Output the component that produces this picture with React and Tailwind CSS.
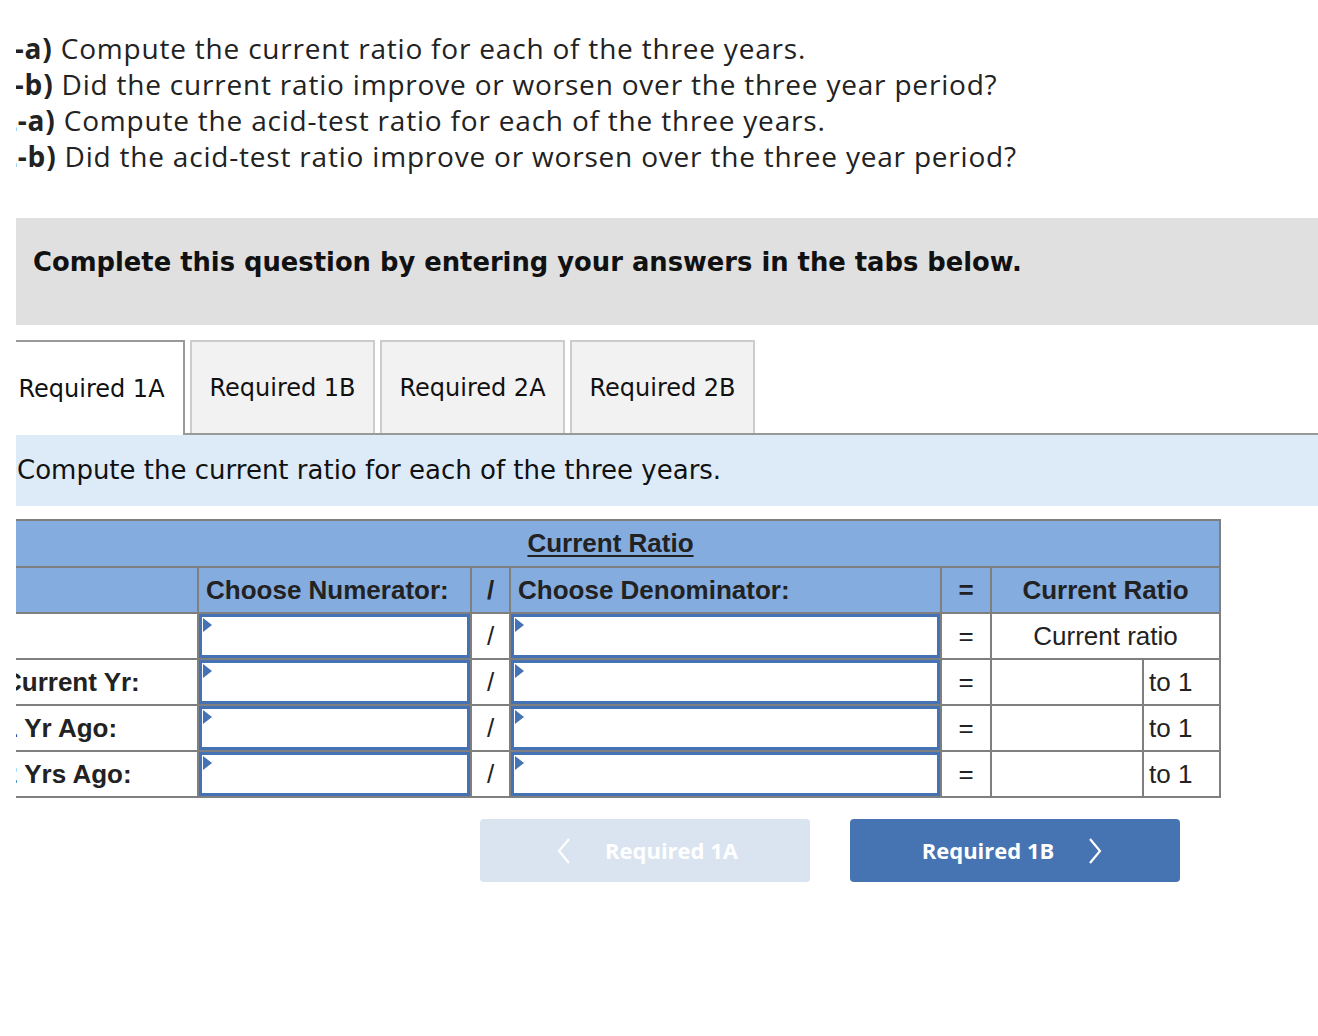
import React from "react";

const Tri = () => (
  <svg className="absolute left-[1px] top-[1px]" width="10" height="14" viewBox="0 0 10 14">
    <polygon points="0,0 9,7 0,14" fill="#4472b4" />
  </svg>
);

const InputCell = () => (
  <td className="p-0 border-2 border-[#7f7f7f] h-[46px]">
    <div className="relative h-[44px] border-[3px] border-[#4472b4] bg-white">
      <Tri />
    </div>
  </td>
);

const cell = "border-2 border-[#7f7f7f] h-[46px]";

function Row({ label, first }) {
  return (
    <tr>
      <td className={`${cell} overflow-hidden whitespace-nowrap pl-[1px] font-bold text-left`}>{label}</td>
      <InputCell />
      <td className={`${cell} text-center`}>/</td>
      <InputCell />
      <td className={`${cell} text-center`}>=</td>
      {first ? (
        <td colSpan={2} className={`${cell} text-center`}>Current ratio</td>
      ) : (
        <>
          <td className={cell}></td>
          <td className={`${cell} pl-[5px] text-left`}>to 1</td>
        </>
      )}
    </tr>
  );
}

export default function App() {
  return (
    <div className="w-[1318px] h-[1036px] bg-white overflow-hidden">
      <div className="ml-[16px] overflow-hidden">
        <div className="-ml-[16px] w-[1318px]">
          {/* question lines */}
          <div className="pt-[30px] text-[28px] tracking-[0.8px] leading-[36px] text-[#222] whitespace-nowrap" style={{ fontFamily: "'Open Sans', sans-serif" }}>
            <div className="-ml-[2px]"><b>1-a)</b> Compute the current ratio for each of the three years.</div>
            <div className="-ml-[2px]"><b>1-b)</b> Did the current ratio improve or worsen over the three year period?</div>
            <div className="ml-[1px]"><b>2-a)</b> Compute the acid-test ratio for each of the three years.</div>
            <div className="ml-[1px]"><b>2-b)</b> Did the acid-test ratio improve or worsen over the three year period?</div>
          </div>

          {/* banner */}
          <div className="mt-[44px] h-[107px] bg-[#e0e0e0] pl-[33px] pt-[27px] text-[25.8px] leading-[34px] font-bold text-[#111] whitespace-nowrap" style={{ fontFamily: "'DejaVu Sans', sans-serif" }}>
            Complete this question by entering your answers in the tabs below.
          </div>

          {/* tabs */}
          <div className="mt-[15px] flex text-[24px] text-[#111]" style={{ fontFamily: "'DejaVu Sans', sans-serif" }}>
            <div className="w-[185px] h-[95px] border-t-2 border-r-2 border-[#999] bg-white flex items-center justify-center">
              Required 1A
            </div>
            <div className="flex-1 flex gap-[5px] pl-[5px] border-b-2 border-[#999]">
              {["Required 1B", "Required 2A", "Required 2B"].map((t) => (
                <div key={t} className="w-[185px] h-[93px] border-t-2 border-x-2 border-[#ccc] bg-[#f2f2f2] flex items-center justify-center">
                  {t}
                </div>
              ))}
            </div>
          </div>

          {/* instruction */}
          <div className="h-[71px] bg-[#ddebf8] flex items-center pl-[17px] text-[26px] text-[#111] whitespace-nowrap" style={{ fontFamily: "'DejaVu Sans', sans-serif" }}>
            Compute the current ratio for each of the three years.
          </div>

          {/* table */}
          <div className="mt-[13px]">
            <table className="table-fixed border-collapse w-[1219px] text-[26px] text-[#222]" style={{ fontFamily: "'Liberation Sans', Arial, sans-serif" }}>
              <colgroup>
                <col className="w-[197px]" />
                <col className="w-[273px]" />
                <col className="w-[39px]" />
                <col className="w-[431px]" />
                <col className="w-[50px]" />
                <col className="w-[152px]" />
                <col className="w-[77px]" />
              </colgroup>
              <thead>
                <tr className="bg-[#84acdf]">
                  <th colSpan={7} className="border-2 border-[#7f7f7f] h-[47px] font-bold text-center">
                    <span className="underline underline-offset-[3px] decoration-2">Current Ratio</span>
                  </th>
                </tr>
                <tr className="bg-[#84acdf]">
                  <th className={cell}></th>
                  <th className={`${cell} font-bold text-left pl-[7px] whitespace-nowrap`}>Choose Numerator:</th>
                  <th className={`${cell} font-bold text-center`}>/</th>
                  <th className={`${cell} font-bold text-left pl-[7px] whitespace-nowrap`}>Choose Denominator:</th>
                  <th className={`${cell} font-bold text-center`}>=</th>
                  <th colSpan={2} className={`${cell} font-bold text-center`}>Current Ratio</th>
                </tr>
              </thead>
              <tbody>
                <Row label="" first />
                <Row label="Current Yr:" />
                <Row label="1 Yr Ago:" />
                <Row label="2 Yrs Ago:" />
              </tbody>
            </table>
          </div>

          {/* buttons */}
          <div className="mt-[21px] ml-[480px] flex gap-[40px] text-[22px] font-bold text-white" style={{ fontFamily: "'Open Sans', sans-serif" }}>
            <div className="w-[330px] h-[63px] rounded-[4px] bg-[#dae4f0] flex items-center justify-center gap-[34px] pl-[5px]">
              <svg width="14" height="26" viewBox="0 0 14 26" fill="none" stroke="white" strokeWidth="2.2">
                <polyline points="12,1 2,13 12,25" />
              </svg>
              <span>Required 1A</span>
            </div>
            <div className="w-[330px] h-[63px] rounded-[4px] bg-[#4674b3] flex items-center justify-center gap-[34px] pr-[6px]">
              <span>Required 1B</span>
              <svg width="14" height="26" viewBox="0 0 14 26" fill="none" stroke="white" strokeWidth="2.2">
                <polyline points="2,1 12,13 2,25" />
              </svg>
            </div>
          </div>
        </div>
      </div>
    </div>
  );
}
